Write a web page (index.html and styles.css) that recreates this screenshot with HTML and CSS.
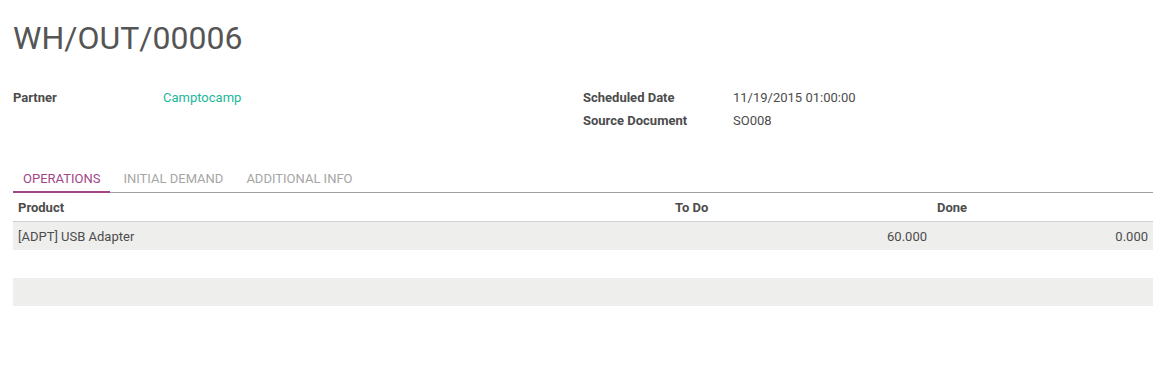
FILE: index.html
```html
<!DOCTYPE html>
<html lang="en">
<head>
    <meta charset="UTF-8">
    <meta name="viewport" content="width=device-width, initial-scale=1.0">
    <title>WH/OUT/00006</title>
    <link rel="stylesheet" href="styles.css">
</head>
<body>
    <div class="sheet">
        <h1 class="title">WH/OUT/00006</h1>

        <div class="groups">
            <table class="group">
                <tr>
                    <td class="label">Partner</td>
                    <td><a href="#" class="link">Camptocamp</a></td>
                </tr>
            </table>
            <table class="group">
                <tr>
                    <td class="label">Scheduled Date</td>
                    <td>11/19/2015 01:00:00</td>
                </tr>
                <tr>
                    <td class="label">Source Document</td>
                    <td>SO008</td>
                </tr>
            </table>
        </div>

        <ul class="tabs">
            <li class="active">OPERATIONS</li>
            <li>INITIAL DEMAND</li>
            <li>ADDITIONAL INFO</li>
        </ul>

        <table class="lines">
            <thead>
                <tr>
                    <th class="col-product">Product</th>
                    <th class="col-qty">To Do</th>
                    <th class="col-done">Done</th>
                </tr>
            </thead>
            <tbody>
                <tr class="grey">
                    <td>[ADPT] USB Adapter</td>
                    <td class="num">60.000</td>
                    <td class="num">0.000</td>
                </tr>
                <tr>
                    <td>&nbsp;</td>
                    <td></td>
                    <td></td>
                </tr>
                <tr class="grey">
                    <td>&nbsp;</td>
                    <td></td>
                    <td></td>
                </tr>
            </tbody>
        </table>
    </div>
</body>
</html>
```

FILE: styles.css
```css
body {
    margin: 0;
    font-family: Roboto, "Liberation Sans", sans-serif;
    font-size: 13px;
    color: #4c4c4c;
    background-color: #fff;
}
.sheet {
    padding: 18px 12px 0 13px;
}
.title {
    margin: 0;
    font-size: 32px;
    font-weight: 400;
    line-height: 40px;
    color: #555;
}
.groups {
    display: flex;
    align-items: flex-start;
    margin-top: 28px;
}
.group {
    width: 50%;
    border-collapse: collapse;
}
.group td {
    padding: 0;
    height: 23px;
    vertical-align: middle;
}
.group .label {
    width: 150px;
    font-weight: bold;
}
.link {
    color: #21b799;
    text-decoration: none;
}
.tabs {
    display: flex;
    list-style: none;
    margin: 33px 0 0;
    padding: 0;
    border-bottom: 1px solid #a0a0a0;
}
.tabs li {
    padding: 2px 10px 0;
    margin-right: 3px;
    line-height: 24px;
    color: #a6a6a6;
    margin-bottom: -1px;
    border-bottom: 2px solid transparent;
}
.tabs li.active {
    color: #a24689;
    border-bottom-color: #a24689;
}
.lines {
    width: 100%;
    border-collapse: collapse;
}
.lines th {
    text-align: left;
    font-weight: bold;
    padding: 0 5px;
    height: 28px;
    border-bottom: 1px solid #d0d0d0;
}
.lines td {
    padding: 0 5px;
    height: 28px;
}
.col-qty {
    width: 252px;
}
.col-done {
    width: 211px;
}
.lines .num {
    text-align: right;
}
.lines tr.grey td {
    background-color: #eeeeec;
}
```
